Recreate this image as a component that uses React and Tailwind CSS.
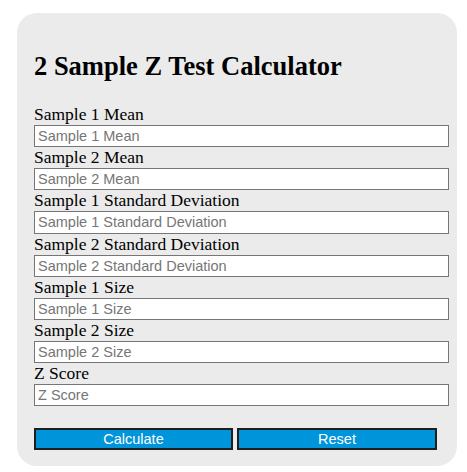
const fields = [
  'Sample 1 Mean',
  'Sample 2 Mean',
  'Sample 1 Standard Deviation',
  'Sample 2 Standard Deviation',
  'Sample 1 Size',
  'Sample 2 Size',
  'Z Score',
];

export default function App() {
  return (
    <div className="min-h-[472px] bg-white pt-[13px] pl-[17px]">
      <div className="w-[440px] rounded-[20px] bg-[#ebebeb] pl-[17px] pt-[38px] pb-[16px]">
        <h2 className="text-[26.5px] font-bold leading-[30px] text-black font-['Liberation_Serif',serif]">
          2 Sample Z Test Calculator
        </h2>
        <div className="mt-[23px]">
          {fields.map((f) => (
            <div key={f}>
              <label className="block h-[21px] text-[17.5px] leading-[21px] text-black font-['Liberation_Serif',serif]">
                {f}
              </label>
              <input
                type="text"
                placeholder={f}
                className="block h-[22.2px] w-[415px] border border-[#767676] bg-white px-[3px] text-[14.5px] font-['Liberation_Sans',sans-serif] placeholder:text-[#767676] outline-none"
              />
            </div>
          ))}
        </div>
        <div className="mt-[22px] flex gap-[4px]">
          <button className="h-[21.5px] w-[199px] border-2 border-[#1e1e1e] bg-[#0095da] text-[14.5px] leading-none text-white font-['Liberation_Sans',sans-serif]">
            Calculate
          </button>
          <button className="h-[21.5px] w-[200px] border-2 border-[#1e1e1e] bg-[#0095da] text-[14.5px] leading-none text-white font-['Liberation_Sans',sans-serif]">
            Reset
          </button>
        </div>
      </div>
    </div>
  );
}
